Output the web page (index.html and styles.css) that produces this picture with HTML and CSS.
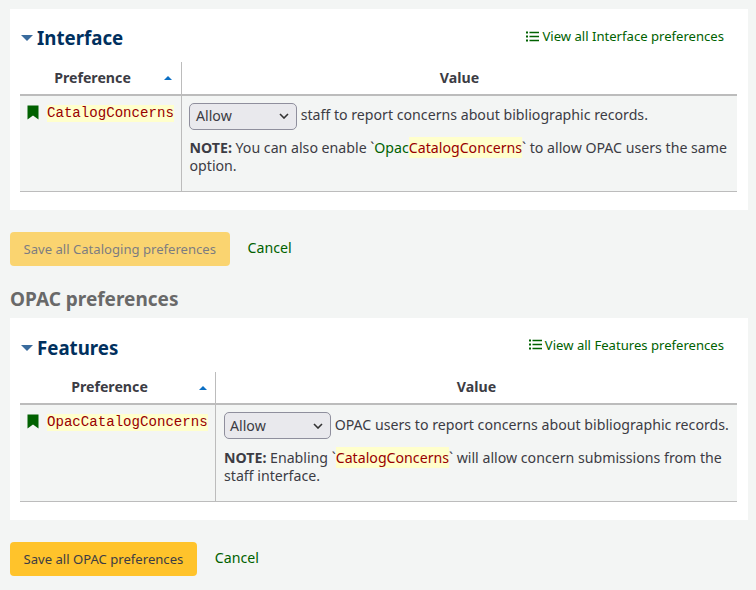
FILE: index.html
```html
<!DOCTYPE html>
<html lang="en">
<head>
<meta charset="utf-8">
<title>System preferences</title>
<link rel="stylesheet" href="styles.css">
</head>
<body>
<main class="page">
  <h2 class="group-title group-title-first">Cataloging preferences</h2>
  <section class="panel">
    <div class="panel-head">
      <h3 class="panel-title"><span class="caret"></span>Interface</h3>
      <a class="view-all" href="#"><svg class="list-icon" viewBox="0 0 13 11" aria-hidden="true"><path d="M0 0.5h2v2H0zM0 4.5h2v2H0zM0 8.5h2v2H0zM3.5 0.7h9.5v1.6H3.5zM3.5 4.7h9.5v1.6H3.5zM3.5 8.7h9.5v1.6H3.5z"/></svg> View all Interface preferences</a>
    </div>
    <table class="prefs prefs-interface">
      <thead><tr><th class="col-name">Preference<span class="sort"></span></th><th class="col-value">Value</th></tr></thead>
      <tbody><tr>
        <td class="name-cell"><div class="name-wrap"><svg class="bookmark" viewBox="0 0 12 15" aria-hidden="true"><path d="M0.5 0.5h11v14L6 10.5 0.5 14.5z"/></svg><code class="pref-name">CatalogConcerns</code></div></td>
        <td class="value-cell">
          <div class="line"><span class="fake-select">Allow<svg class="chev" viewBox="0 0 10 6" aria-hidden="true"><path d="M1 1l4 4 4-4"/></svg></span> staff to report concerns about bibliographic records.</div>
          <p class="note"><strong>NOTE:</strong> You can also enable `<a class="xref" href="#">Opac<mark>CatalogConcerns</mark></a>` to allow OPAC users the same option.</p>
        </td>
      </tr></tbody>
    </table>
  </section>
  <div class="actions">
    <button class="save save-disabled" type="button">Save all Cataloging preferences</button>
    <a class="cancel" href="#">Cancel</a>
  </div>

  <h2 class="group-title">OPAC preferences</h2>
  <section class="panel panel-features">
    <div class="panel-head">
      <h3 class="panel-title"><span class="caret"></span>Features</h3>
      <a class="view-all" href="#"><svg class="list-icon" viewBox="0 0 13 11" aria-hidden="true"><path d="M0 0.5h2v2H0zM0 4.5h2v2H0zM0 8.5h2v2H0zM3.5 0.7h9.5v1.6H3.5zM3.5 4.7h9.5v1.6H3.5zM3.5 8.7h9.5v1.6H3.5z"/></svg> View all Features preferences</a>
    </div>
    <table class="prefs prefs-features">
      <thead><tr><th class="col-name">Preference<span class="sort"></span></th><th class="col-value">Value</th></tr></thead>
      <tbody><tr>
        <td class="name-cell"><div class="name-wrap"><svg class="bookmark" viewBox="0 0 12 15" aria-hidden="true"><path d="M0.5 0.5h11v14L6 10.5 0.5 14.5z"/></svg><code class="pref-name">OpacCatalogConcerns</code></div></td>
        <td class="value-cell">
          <div class="line"><span class="fake-select">Allow<svg class="chev" viewBox="0 0 10 6" aria-hidden="true"><path d="M1 1l4 4 4-4"/></svg></span> OPAC users to report concerns about bibliographic records.</div>
          <p class="note"><strong>NOTE:</strong> Enabling `<mark>CatalogConcerns</mark>` will allow concern submissions from the staff interface.</p>
        </td>
      </tr></tbody>
    </table>
  </section>
  <div class="actions">
    <button class="save" type="button">Save all OPAC preferences</button>
    <a class="cancel" href="#">Cancel</a>
  </div>
</main>
</body>
</html>
```

FILE: styles.css
```css
html, body {
  margin: 0;
  height: 590px;
  overflow: hidden;
  background: #f3f5f4;
}
body {
  font-family: "Noto Sans", sans-serif;
  font-size: 14.16px;
  line-height: 18px;
  color: #3c3c44;
}
.page {
  margin-top: -31px;
  padding: 0 8px 0 10px;
}
.group-title {
  margin: 0 0 6px;
  font-size: 19px;
  line-height: 26px;
  font-weight: 700;
  color: #696969;
}
.group-title-first {
  margin-bottom: 14px;
}
.panel {
  background: #fff;
  padding: 10px 11px 18px 10px;
}
.panel-head {
  display: flex;
  justify-content: space-between;
  align-items: flex-start;
  height: 43px;
  padding-right: 2px;
}
.panel-features .panel-head {
  height: 44px;
}
.panel-title {
  margin: 4px 0 0;
  font-size: 18.7px;
  line-height: 29px;
  font-weight: 700;
  color: #00305e;
  display: flex;
  align-items: center;
}
.panel-features .panel-title {
  margin-top: 5px;
}
.caret {
  width: 0;
  height: 0;
  margin: 1px 4px 0 1px;
  border-left: 6px solid transparent;
  border-right: 6px solid transparent;
  border-top: 6px solid #396b9d;
}
.view-all {
  margin-top: 8px;
  margin-right: 11px;
  font-size: 13.1px;
  color: #006100;
  text-decoration: none;
  display: flex;
  align-items: center;
  gap: 3px;
}
.list-icon {
  width: 13px;
  height: 11px;
  fill: #006100;
}
.prefs {
  width: 717px;
  border-collapse: collapse;
  table-layout: fixed;
}
.prefs-interface .col-name { width: 145px; }
.prefs-features .col-name { width: 179px; }
.prefs th {
  position: relative;
  height: 32px;
  padding: 0;
  font-weight: 700;
  text-align: center;
  color: #3c3c44;
  border-bottom: 2px solid #bcbcbc;
}
.prefs-features th {
  height: 31px;
}
.prefs .col-name {
  padding-right: 16px;
  border-right: 1px solid #bcbcbc;
}
.prefs td {
  background: #f3f5f4;
  vertical-align: top;
  border-bottom: 1px solid #bcbcbc;
  padding: 0;
}
.sort {
  position: absolute;
  right: 9px;
  top: 14px;
  width: 0;
  height: 0;
  border-left: 4px solid transparent;
  border-right: 4px solid transparent;
  border-bottom: 4px solid #0b6fc4;
}
.prefs-features .sort {
  right: 8px;
}
.name-cell {
  border-right: 1px solid #bcbcbc;
}
.name-wrap {
  display: flex;
  align-items: flex-start;
  gap: 8px;
  padding: 9px 0 0 7px;
}
.bookmark {
  width: 12px;
  height: 15px;
  flex: none;
  fill: #006100;
}
.pref-name {
  font-family: "Liberation Mono", monospace;
  font-size: 14.1px;
  line-height: 17px;
  color: #990000;
  background: #ffffcc;
}
.prefs td.value-cell {
  padding: 5px 7px 16px 7px;
}
.prefs-features td.value-cell {
  padding-top: 6px;
  padding-left: 8px;
}
.line {
  line-height: 28px;
}
.fake-select {
  display: inline-flex;
  align-items: center;
  justify-content: space-between;
  box-sizing: border-box;
  width: 108px;
  height: 27px;
  padding: 0 0 0 6px;
  vertical-align: middle;
  background: #e9e9ed;
  border: 1px solid #8f8f9d;
  border-radius: 5px;
  color: #3c3c44;
}
.prefs-features .fake-select {
  width: 107px;
  padding-left: 5px;
}
.chev {
  width: 10px;
  height: 6px;
  margin-right: 7px;
  fill: none;
  stroke: #333;
  stroke-width: 1.6;
}
.note {
  margin: 9px 0 0;
  padding-left: 0.5px;
}
.prefs-features .note {
  margin-top: 10px;
  padding-left: 0;
}
mark {
  padding: 1px 0;
  background: #ffffcc;
  color: #990000;
}
.xref {
  color: #006100;
  text-decoration: none;
}
.actions {
  display: flex;
  align-items: flex-start;
  gap: 18px;
  margin: 22px 0 0;
  height: 34px;
}
.save {
  box-sizing: border-box;
  height: 34px;
  padding: 0 13.5px;
  font-family: inherit;
  font-size: 13.1px;
  color: #3c3c44;
  background: #ffc32b;
  border: 0;
  border-radius: 4px;
}
.save-disabled {
  opacity: 0.65;
}
.cancel {
  margin-top: 7px;
  color: #006100;
  text-decoration: none;
}
.actions + .group-title {
  margin-top: 20px;
}
```
